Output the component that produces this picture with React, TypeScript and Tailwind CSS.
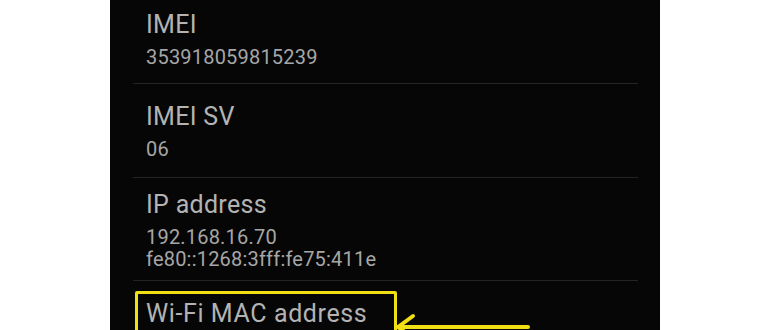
const rows = [
  { title: "IMEI", values: ["353918059815239"], pad: "pt-[10px] pb-[15px]" },
  { title: "IMEI SV", values: ["06"], pad: "pt-[18px] pb-[17px]" },
  { title: "IP address", values: ["192.168.16.70", "fe80::1268:3fff:fe75:411e"], pad: "pt-[12px] pb-[10px]" },
];

function Divider() {
  return <div className="ml-[23px] mr-[22px] h-px bg-[#242424]" />;
}

export default function App() {
  return (
    <div className="w-[770px] h-[330px] bg-white overflow-hidden" style={{ fontFamily: "Roboto, 'Liberation Sans', sans-serif" }}>
      <div className="relative ml-[110px] w-[550px] h-[330px] bg-[#060606] overflow-hidden">
        {rows.map((r) => (
          <div key={r.title}>
            <div className={`pl-[36px] ${r.pad}`}>
              <div className="text-[25px] leading-[30px] tracking-[0.3px] text-[#b3b3b3]">{r.title}</div>
              <div className="mt-[6px]">
                {r.values.map((v) => (
                  <div key={v} className="text-[20px] leading-[22px] tracking-[0.2px] text-[#a6a6a6]">
                    {v}
                  </div>
                ))}
              </div>
            </div>
            <Divider />
          </div>
        ))}

        {/* highlighted row */}
        <div className="mt-[10px] ml-[25px] w-[262px] h-[60px] border-[3px] border-[#f0df14] rounded-[2px] pl-[8px] pt-[6px]">
          <div className="text-[25px] leading-[28px] tracking-[0.6px] text-[#b3b3b3]">Wi-Fi MAC address</div>
        </div>

        {/* arrow annotation */}
        <svg className="absolute left-[284px] top-[310px]" width="140" height="30" viewBox="0 0 140 30">
          <g stroke="#f0df14" strokeWidth="4" strokeLinecap="round" fill="none">
            <line x1="4" y1="17" x2="134" y2="17" />
            <line x1="4" y1="17" x2="19" y2="6" />
            <line x1="4" y1="17" x2="19" y2="28" />
          </g>
        </svg>
      </div>
    </div>
  );
}
